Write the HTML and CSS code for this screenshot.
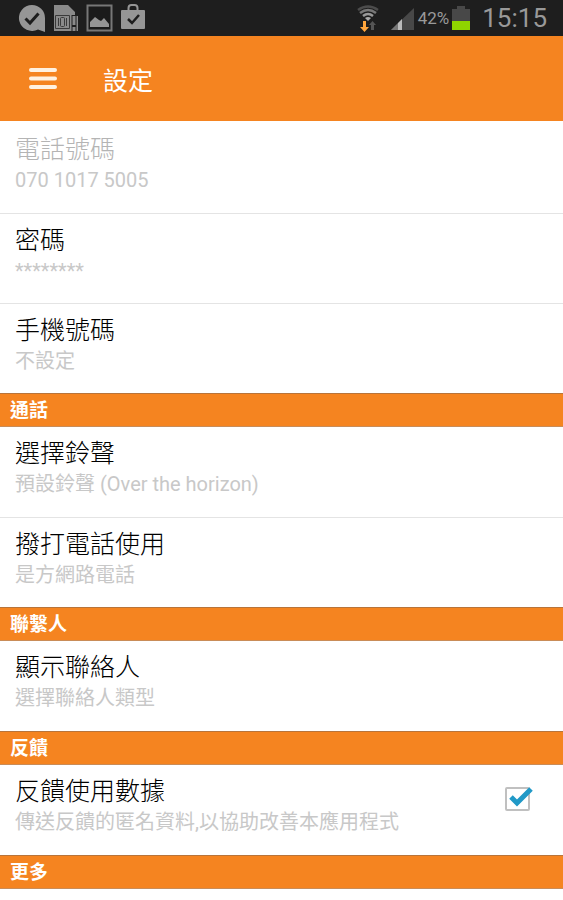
FILE: index.html
```html
<!DOCTYPE html>
<html lang="zh-Hant">
<head>
  <meta charset="UTF-8">
  <meta name="viewport" content="width=device-width, initial-scale=1">
  <title>設定</title>
  <link rel="stylesheet" href="styles.css">
</head>
<body>

<div class="status-bar">
  <div class="notifications">
    <svg width="28" height="28" viewBox="0 0 28 28">
      <path fill="#969696" d="M14 1a13 13 0 1 0 6 24.500l7 2.500V14A13 13 0 0 0 14 1z"/>
      <path fill="none" stroke="#1e1e1e" stroke-width="3" d="M7.500 14.500l4.500 4.500 8.500-9.500"/>
    </svg>
    <svg width="26" height="28" viewBox="0 0 26 28">
      <path fill="#8a8a8a" d="M1 1h14l7 7v4h3v15H1z"/>
      <path fill="none" stroke="#3a3a3a" d="M2.500 11.500h14v13h-14zM5.500 14v8M13.500 14v8"/>
      <rect x="7.500" y="13.500" width="4" height="9" rx="1" fill="none" stroke="#3a3a3a"/>
      <path stroke="#1e1e1e" stroke-width="5" d="M21 11v17"/>
      <path stroke="#8a8a8a" stroke-width="3" d="M21 12v9M21 23v4"/>
    </svg>
    <svg width="27" height="28" viewBox="0 0 27 28">
      <rect x="1.500" y="1.500" width="24" height="25" fill="#1b1b1b" stroke="#777" stroke-width="2"/>
      <path fill="#959595" d="M4 23v-5l5-5 4 3 2 1 3-3 5 6v3z"/>
    </svg>
    <svg width="26" height="28" viewBox="0 0 26 28">
      <path fill="none" stroke="#969696" stroke-width="2" d="M8.500 7V4q0-3 3-3h3q3 0 3 3v3"/>
      <rect x="1" y="6" width="24" height="19" rx="1" fill="#969696"/>
      <path fill="none" stroke="#1e1e1e" stroke-width="2.500" d="M8 15l4 4 7-8"/>
    </svg>
  </div>
  <div class="system">
    <svg width="24" height="28" viewBox="0 0 24 28">
      <g fill="none" stroke="#777" stroke-width="2.500">
        <path stroke="#4c4c4c" d="M2 6q10-7 20 0"/>
        <path d="M4 9q8-6 16 0"/>
        <path stroke="#999" d="M7 12q5-4 10 0"/>
      </g>
      <path fill="#aaa" d="M9 14q3-2 6 0l-3 3z"/>
      <path fill="#ffa63d" d="M7 17h3v6h3l-4.500 5L4 23h3z"/>
      <path fill="#555" d="M15 26v-5h-2l3.500-4 3.500 4h-2v5z"/>
    </svg>
    <svg class="signal" width="24" height="24" viewBox="0 0 24 24">
      <path fill="#484848" d="M24 1v22H1z"/>
      <path fill="#777" d="M8 16v7H1z"/>
      <path fill="#bbb" d="M12 12v11H8v-7z"/>
    </svg>
    <span class="percent">42%</span>
    <svg class="battery" width="18" height="26" viewBox="0 0 18 26">
      <path fill="#484848" d="M5 1h8v3h5v12H0V4h5z"/>
      <path fill="#8fd400" d="M0 16h18v9H0z"/>
    </svg>
    <span class="clock">15:15</span>
  </div>
</div>

<header class="app-bar">
  <button class="menu-button" type="button" aria-label="選單">
    <svg width="30" height="24" viewBox="0 0 30 24">
      <path stroke="#fff1e0" stroke-width="4" stroke-linecap="round" d="M3 3h24M3 11.500h24M3 20h24"/>
    </svg>
  </button>
  <h1>設定</h1>
</header>

<main class="settings">
  <section>
    <div class="item disabled">
      <h3>電話號碼</h3>
      <p>070 1017 5005</p>
    </div>
    <div class="item">
      <h3>密碼</h3>
      <p>********</p>
    </div>
    <div class="item">
      <h3>手機號碼</h3>
      <p>不設定</p>
    </div>
  </section>

  <section>
    <h2>通話</h2>
    <div class="item">
      <h3>選擇鈴聲</h3>
      <p>預設鈴聲 (Over the horizon)</p>
    </div>
    <div class="item">
      <h3>撥打電話使用</h3>
      <p>是方網路電話</p>
    </div>
  </section>

  <section>
    <h2>聯繫人</h2>
    <div class="item">
      <h3>顯示聯絡人</h3>
      <p>選擇聯絡人類型</p>
    </div>
  </section>

  <section>
    <h2>反饋</h2>
    <div class="item with-check">
      <div>
        <h3><label for="feedback">反饋使用數據</label></h3>
        <p>傳送反饋的匿名資料,以協助改善本應用程式</p>
      </div>
      <div class="check">
        <input type="checkbox" id="feedback" checked>
        <svg width="32" height="28" viewBox="0 0 32 28">
          <path fill="none" stroke="#2199c7" stroke-width="5" d="M6 12l6 6L26 4"/>
        </svg>
      </div>
    </div>
  </section>

  <section>
    <h2>更多</h2>
  </section>
</main>

</body>
</html>
```

FILE: styles.css
```css
body {
  margin: 0;
  background: #fff;
  font-family: Roboto, "Noto Sans CJK TC", sans-serif;
}

h1, h2, h3, p {
  margin: 0;
  font-weight: normal;
}

/* ----- status bar ----- */
.status-bar {
  display: flex;
  justify-content: space-between;
  align-items: center;
  height: 36px;
  padding: 0 16px 0 18px;
  background: #1e1e1e;
  color: #999;
}

.notifications,
.system {
  display: flex;
  align-items: center;
}

.notifications {
  gap: 7px;
}

.signal {
  margin: 2px 4px 0 10px;
}

.percent {
  font-size: 17px;
}

.battery {
  margin: 0 12px 0 3px;
}

.clock {
  font-size: 26px;
}

/* ----- app bar ----- */
.app-bar {
  display: flex;
  align-items: center;
  gap: 45px;
  height: 85px;
  padding: 0 28px;
  background: #f58420;
  color: #fff;
}

.app-bar h1 {
  font-size: 25px;
}

.menu-button {
  display: flex;
  padding: 0;
  border: 0;
  background: none;
}

/* ----- settings list ----- */
.settings {
  padding-top: 2px;
}

.settings h2 {
  box-sizing: border-box;
  height: 34px;
  padding-left: 10px;
  border-top: 1px solid #b8743a;
  border-bottom: 1px solid #c98c58;
  background: #f58420;
  color: #fff;
  font-size: 19px;
  font-weight: bold;
  line-height: 34px;
}

.item {
  box-sizing: border-box;
  height: 90px;
  padding: 11px 15px 0;
}

.item + .item {
  border-top: 1px solid #e4e4e4;
}

.item h3 {
  color: #000;
  font-size: 25px;
  font-weight: 300;
  line-height: 32px;
}

.item p {
  color: #c8c8c8;
  font-size: 20px;
  line-height: 28px;
}

.item.disabled h3 {
  color: #b4b4b4;
}

.with-check {
  display: flex;
  justify-content: space-between;
}

/* ----- checkbox ----- */
.check {
  position: relative;
  margin: 11px 18px 0 0;
}

.check input {
  display: block;
  appearance: none;
  box-sizing: border-box;
  width: 25px;
  height: 24px;
  margin: 0;
  border: 2px solid #c0c0c0;
  border-radius: 2px;
}

.check svg {
  position: absolute;
  top: -2px;
  left: 0;
  pointer-events: none;
}

.check input:not(:checked) + svg {
  display: none;
}
```
